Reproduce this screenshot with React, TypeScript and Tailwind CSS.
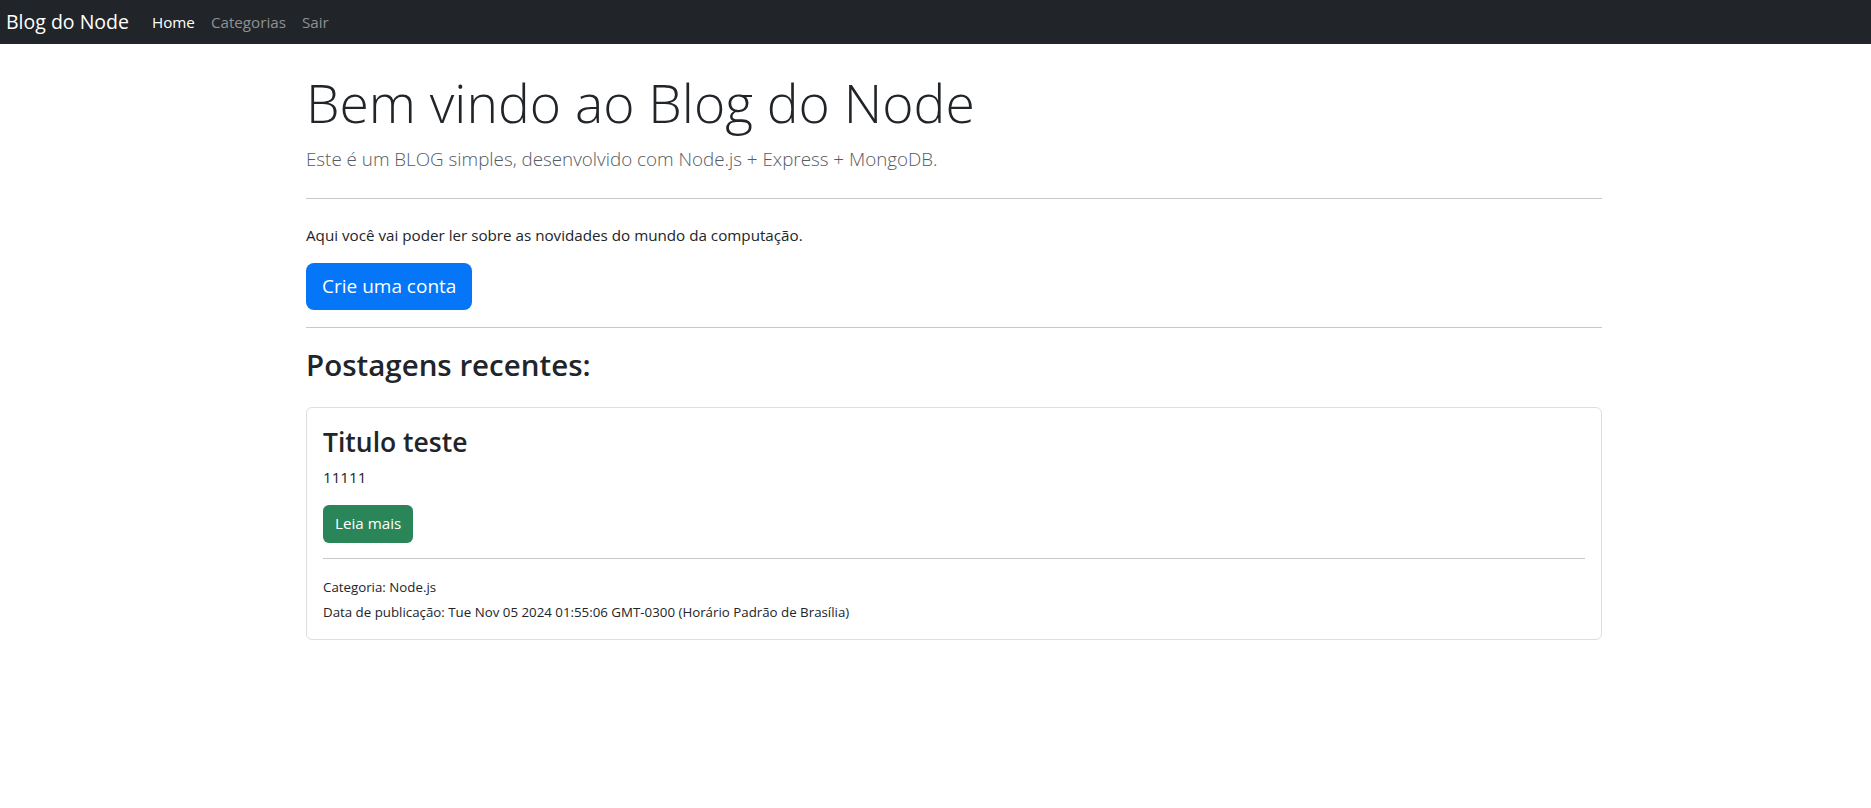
import React from "react";

const navLinks = [
	{ label: "Home", active: true },
	{ label: "Categorias", active: false },
	{ label: "Sair", active: false },
];

function Navbar() {
	return (
		<nav className="flex h-[44px] items-center bg-[#212529] pl-[6px]">
			<a href="#" className="mr-[15px] text-[19.5px] leading-[30px] text-white">
				Blog do Node
			</a>
			<ul className="flex">
				{navLinks.map((link) => (
					<li key={link.label}>
						<a
							href="#"
							className={`block px-[8px] text-[15.2px] leading-[24px] ${link.active ? "text-white" : "text-[#8e9194]"}`}
						>
							{link.label}
						</a>
					</li>
				))}
			</ul>
		</nav>
	);
}

function PostCard() {
	return (
		<div className="mt-[23px] rounded-[6px] border border-[#dcdee0] p-[16px]">
			<h3 className="mt-[2px] text-[26.5px] font-semibold leading-[1.25]">Titulo teste</h3>
			<p className="mt-[5px] text-[15.2px] leading-[24px]">11111</p>
			<a
				href="#"
				className="mt-[16px] inline-flex h-[38px] items-center rounded-[6px] bg-[#2a8658] px-[12px] text-[15.2px] text-white"
			>
				Leia mais
			</a>
			<hr className="mt-[15px] border-t border-[#c8c9ca]" />
			<div className="mt-[18px] text-[13.3px] leading-[21px]">
				<p>Categoria: Node.js</p>
				<p className="mt-[4px]">
					Data de publicação: Tue Nov 05 2024 01:55:06 GMT-0300 (Horário Padrão de Brasília)
				</p>
			</div>
		</div>
	);
}

export default function App() {
	return (
		<div className="min-h-[808px] bg-white font-['Open_Sans','Noto_Sans',sans-serif] text-[#212529]">
			<Navbar />

			<main className="ml-[306px] w-[1296px]">
				{/* Jumbotron */}
				<h1 className="mt-[27px] text-[53.4px] font-light leading-[1.2]">Bem vindo ao Blog do Node</h1>
				<p className="mt-[9px] text-[18.8px] font-light leading-[30px] text-[#545b62]">
					Este é um BLOG simples, desenvolvido com Node.js + Express + MongoDB.
				</p>
				<hr className="mt-[24px] border-t border-[#c8c9ca]" />
				<p className="mt-[24px] text-[15.2px] leading-[24px]">
					Aqui você vai poder ler sobre as novidades do mundo da computação.
				</p>
				<a
					href="#"
					className="mt-[16px] inline-flex h-[47px] items-center rounded-[8px] bg-[#0476f7] px-[16px] text-[19px] text-white"
				>
					Crie uma conta
				</a>
				<hr className="mt-[17px] border-t border-[#c8c9ca]" />

				<h2 className="mt-[18px] text-[29.5px] font-semibold leading-[1.3]">Postagens recentes:</h2>

				<PostCard />
			</main>
		</div>
	);
}
